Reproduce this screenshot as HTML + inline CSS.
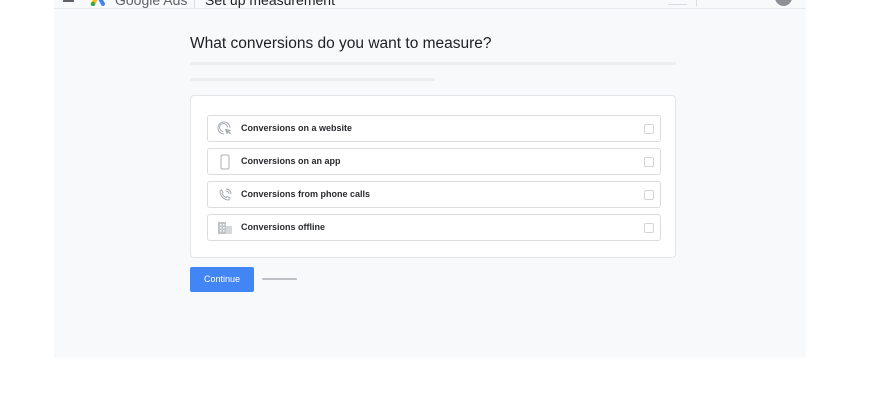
<!DOCTYPE html>
<html><head><meta charset="utf-8"><style>
*{margin:0;padding:0;box-sizing:border-box}
body{width:870px;height:400px;background:#fff;position:relative;overflow:hidden;font-family:"Liberation Sans",Arial,sans-serif;color:#202124}
.page{position:absolute;left:54px;top:0;width:752px;height:358px;background:#f8f9fa}
.hdr{position:absolute;left:54px;top:0;width:752px;height:9px;border-bottom:1px solid #e8eaed;overflow:hidden;background:#f8f9fa}
.hdr span{position:absolute;top:-8px;font-size:14px;white-space:nowrap}
.title{position:absolute;left:190px;top:35px;font-size:15.5px;color:#202124}
.bar{position:absolute;height:3px;background:#eceef0;border-radius:2px}
.card{position:absolute;left:190px;top:95px;width:486px;height:163px;background:#fff;border:1px solid #e3e5e8;border-radius:4px}
.row{position:absolute;left:207px;width:454px;height:27px;background:#fff;border:1px solid #dadce0;border-radius:3px}
.row .t{position:absolute;left:33px;top:7px;font-size:9px;font-weight:bold;color:#2a2b2e}
.row .cb{position:absolute;right:6px;top:8px;width:10px;height:10px;border:1px solid #d3d5d8;border-radius:2px}
.row svg{position:absolute;left:9px;top:5px}
.btn{position:absolute;left:190px;top:267px;width:64px;height:25px;background:#4285f4;border-radius:2px;color:#fff;font-size:9px;text-align:center;line-height:25px}
</style></head><body>
<div class="page"></div>
<div class="hdr">
  <div style="position:absolute;left:9px;top:0;width:11px;height:2px;background:#5f6368"></div>
  <svg style="position:absolute;left:36px;top:-6px" width="16" height="12"><path d="M3 10 L8 1" stroke="#fbbc04" stroke-width="4" stroke-linecap="round"/><path d="M8 1 L13 10" stroke="#4285f4" stroke-width="4" stroke-linecap="round"/><circle cx="3" cy="10" r="2.3" fill="#34a853"/></svg>
  <span style="left:61px;color:#5f6368">Google Ads</span>
  <div style="position:absolute;left:140px;top:0;width:1px;height:9px;background:#dadce0"></div>
  <span style="left:151px;color:#202124">Set up measurement</span>
  <div style="position:absolute;left:614px;top:4px;width:19px;height:1px;background:#dadce0"></div>
  <div style="position:absolute;left:642px;top:0;width:1px;height:6px;background:#dadce0"></div>
  <div style="position:absolute;left:721px;top:-11px;width:17px;height:17px;border-radius:50%;background:#8d9095"></div>
</div>
<div class="title">What conversions do you want to measure?</div>
<div class="bar" style="left:190px;top:62px;width:486px"></div>
<div class="bar" style="left:190px;top:78px;width:245px"></div>
<div class="card"></div>
<div class="row" style="top:115px"><svg width="16" height="16" viewBox="0 0 16 16" fill="none" stroke="#a8adb2" stroke-width="1"><path d="M13 7A6 6 0 1 0 7 13"/><path d="M10.5 6.5A4 4 0 1 0 6.5 10.5"/><path d="M8 8l2 5 1-2 2 2 0.7-0.7-2-2 2-1z" fill="#a8adb2" stroke-width="0.5"/></svg><span class="t">Conversions on a website</span><span class="cb"></span></div>
<div class="row" style="top:148px"><svg width="16" height="16" viewBox="0 0 16 16" fill="none" stroke="#a8adb2" stroke-width="1"><rect x="4" y="1" width="8" height="14" rx="1.5"/></svg><span class="t">Conversions on an app</span><span class="cb"></span></div>
<div class="row" style="top:181px"><svg width="16" height="16" viewBox="0 0 16 16" fill="none" stroke="#a8adb2" stroke-width="1"><path d="M3 4c0 5 4 9 9 9l1-2-3-1.5-1 1c-2-1-3-2-4-4l1-1L4.5 3z"/><path d="M9 2a5 5 0 0 1 5 5M9 4a3 3 0 0 1 3 3"/></svg><span class="t">Conversions from phone calls</span><span class="cb"></span></div>
<div class="row" style="top:214px"><svg width="16" height="16" viewBox="0 0 16 16" fill="#c0c3c7"><rect x="1" y="2" width="8" height="12"/><rect x="9" y="6" width="6" height="8" fill="#d6d8db"/><rect x="3" y="4" width="1.5" height="1.5" fill="#fff"/><rect x="6" y="4" width="1.5" height="1.5" fill="#fff"/><rect x="3" y="7" width="1.5" height="1.5" fill="#fff"/><rect x="6" y="7" width="1.5" height="1.5" fill="#fff"/><rect x="3" y="10" width="1.5" height="1.5" fill="#fff"/><rect x="6" y="10" width="1.5" height="1.5" fill="#fff"/></svg><span class="t">Conversions offline</span><span class="cb"></span></div>
<div class="btn">Continue</div>
<div style="position:absolute;left:262px;top:278px;width:35px;height:2px;background:#bdc1c6;border-radius:1px"></div>
</body></html>
